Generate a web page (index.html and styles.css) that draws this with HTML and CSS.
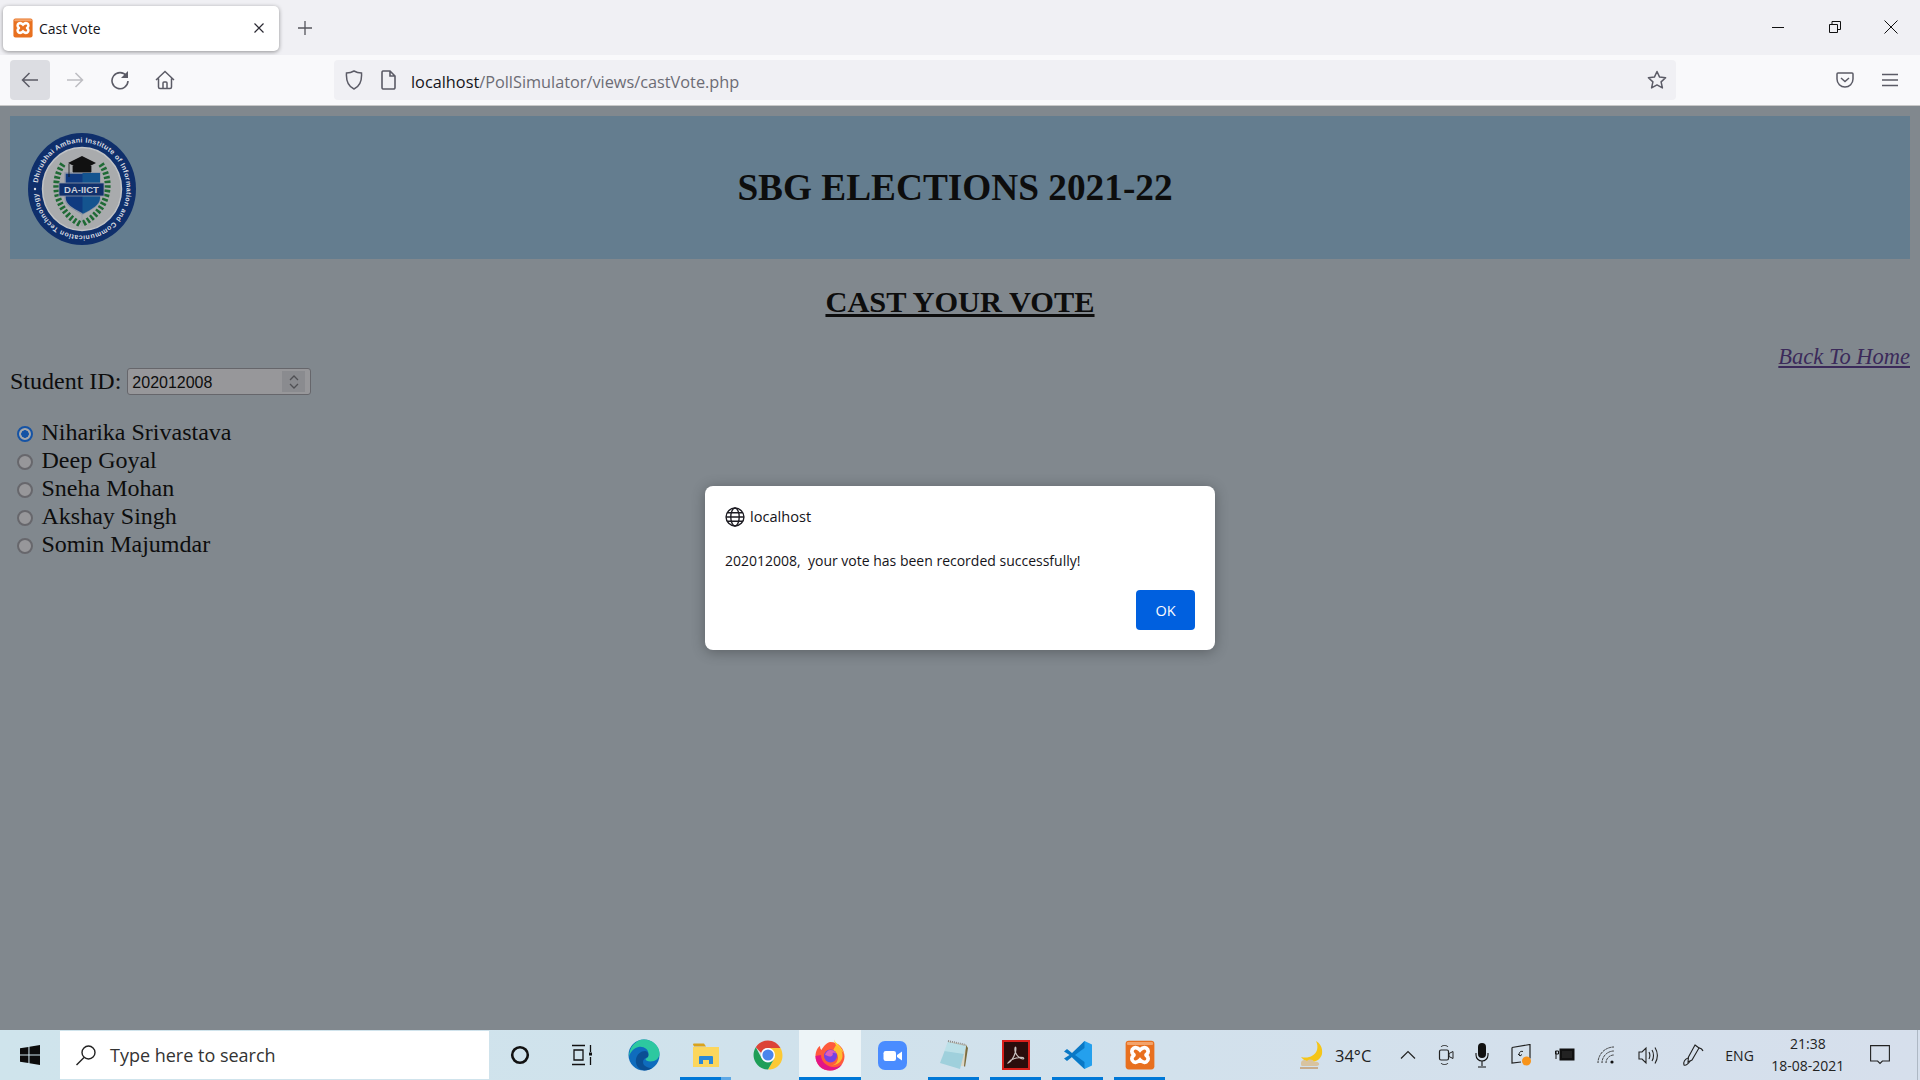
FILE: index.html
```html
<!DOCTYPE html>
<html lang="en">
<head>
    <meta charset="UTF-8">
    <title>Cast Vote</title>
    <link rel="stylesheet" href="styles.css">
</head>
<body>
    <svg class="defs" width="0" height="0">
        <symbol id="xampp" viewBox="0 0 24 24">
            <rect x="0.500" y="0.500" width="23" height="23" rx="2.500" fill="#e8701f"/>
            <rect x="1.500" y="1.500" width="21" height="2.500" rx="1" fill="#f3a36a"/>
            <path d="M7 6.500c2-1 3.500 0 5 1.500 1.500-1.500 3-2.500 5-1.500 2 1.200 2 3.800.2 5-.5.300-.5.700 0 1 1.800 1.200 1.800 3.800-.2 5-2 1-3.500 0-5-1.500-1.500 1.500-3 2.500-5 1.500-2-1.200-2-3.800-.2-5 .5-.3.500-.7 0-1C5 10.300 5 7.700 7 6.500z" fill="none" stroke="#fff" stroke-width="3"/>
        </symbol>
    </svg>

    <div class="tabbar">
        <div class="tab">
            <svg class="favicon" width="20" height="20"><use href="#xampp"/></svg>
            <span class="tab-title">Cast Vote</span>
            <svg class="tab-close" width="12" height="12" viewBox="0 0 12 12"><path d="M1.500 1.500l9 9M10.500 1.500l-9 9" stroke="#2b2a33" stroke-width="1.200"/></svg>
        </div>
        <svg class="new-tab" width="16" height="16" viewBox="0 0 16 16"><path d="M8 1v14M1 8h14" stroke="#55555c" stroke-width="1.300"/></svg>
        <div class="window-btns">
            <svg width="14" height="14" viewBox="0 0 14 14"><path d="M1 7.500h12" stroke="#111" stroke-width="1"/></svg>
            <svg width="14" height="14" viewBox="0 0 14 14"><path d="M1.500 4.500h8v8h-8zM4 4.500V1.500h8.500v8h-3" fill="none" stroke="#111" stroke-width="1"/></svg>
            <svg width="14" height="14" viewBox="0 0 14 14"><path d="M.5.500l13 13M13.500.500l-13 13" stroke="#111" stroke-width="1"/></svg>
        </div>
    </div>

    <div class="toolbar">
        <div class="nav-btn active">
            <svg width="18" height="18" viewBox="0 0 18 18"><path d="M17 9H1.500M8.500 2L1.500 9l7 7" fill="none" stroke="#5b5b66" stroke-width="1.500"/></svg>
        </div>
        <div class="nav-btn">
            <svg width="18" height="18" viewBox="0 0 18 18"><path d="M1 9h15.500M9.500 2l7 7-7 7" fill="none" stroke="#bdbdc2" stroke-width="1.500"/></svg>
        </div>
        <div class="nav-btn">
            <svg width="20" height="20" viewBox="0 0 20 20"><path d="M16.500 6A8 8 0 1 0 18 11" fill="none" stroke="#5b5b66" stroke-width="1.600"/><path d="M18 1v7h-7z" fill="#5b5b66"/></svg>
        </div>
        <div class="nav-btn">
            <svg width="20" height="20" viewBox="0 0 20 20"><path d="M1 10l9-8.500 9 8.500M3.500 8.500V17a1.500 1.500 0 0 0 1.500 1.500h10a1.500 1.500 0 0 0 1.500-1.500V8.500M8 18.500V13a1 1 0 0 1 1-1h2a1 1 0 0 1 1 1v5.500" fill="none" stroke="#5b5b66" stroke-width="1.500"/></svg>
        </div>
        <div class="urlbar">
            <svg class="shield" width="18" height="20" viewBox="0 0 18 20"><path d="M9 1c2.500 1.500 5 2 7.500 2 .5 7-1 13-7.500 16C2.500 16 1 10 1.500 3 4 3 6.500 2.500 9 1z" fill="none" stroke="#5b5b66" stroke-width="1.500"/></svg>
            <svg class="page-icon" width="16" height="20" viewBox="0 0 16 20"><path d="M2 1h7l5 5v11.500a1.500 1.500 0 0 1-1.500 1.500h-10.500a1.500 1.500 0 0 1-1-1.500V2.500A1.500 1.500 0 0 1 2 1zM9 1v5h5" fill="none" stroke="#5b5b66" stroke-width="1.600"/></svg>
            <span class="url"><span class="url-host">localhost</span>/PollSimulator/views/castVote.php</span>
            <svg class="star" width="20" height="20" viewBox="0 0 20 20"><path d="M10 1.500l2.600 5.600 6 .7-4.500 4.100 1.300 6L10 14.900l-5.400 3 1.300-6L1.400 7.800l6-.7z" fill="none" stroke="#5b5b66" stroke-width="1.500" stroke-linejoin="round"/></svg>
        </div>
        <svg class="pocket" width="18" height="16" viewBox="0 0 18 16"><path d="M2 1h14a1 1 0 0 1 1 1v5a8 8 0 0 1-16 0V2a1 1 0 0 1 1-1z" fill="none" stroke="#5b5b66" stroke-width="1.500"/><path d="M5 6l4 3.500L13 6" fill="none" stroke="#5b5b66" stroke-width="1.500"/></svg>
        <svg class="menu" width="16" height="14" viewBox="0 0 16 14"><path d="M0 1.500h16M0 7h16M0 12.500h16" stroke="#5b5b66" stroke-width="1.300"/></svg>
    </div>

    <div class="page">
        <div class="banner">
            <svg class="logo" width="108" height="112" viewBox="0 0 108 112">
                <defs>
                    <path id="ring" d="M9.500 56A44.500 46.500 0 1 1 98.500 56A44.500 46.500 0 1 1 9.500 56"/>
                </defs>
                <ellipse cx="54" cy="56" rx="54" ry="56" fill="#0f2f6b"/>
                <ellipse cx="54" cy="56" rx="39.500" ry="41.500" fill="#a9abad" stroke="#c2c4c6" stroke-width="1.500"/>
                <text class="logo-ring" textLength="275"><textPath href="#ring" startOffset="6">Dhirubhai Ambani Institute of Information and Communication Technology</textPath></text>
                <circle cx="7" cy="56" r="1.200" fill="#d9dce2"/>
                <path d="M35 31C22 50 28 78 52 91M73 31c13 19 7 47-19 60" fill="none" stroke="#1f6a35" stroke-width="6" stroke-dasharray="2.500 2"/>
                <path d="M37 40h35v25c0 7-8 11-17.500 16C45 76 37 72 37 65z" fill="#0f3a80" stroke="#8e97a6" stroke-width="1.500"/>
                <path d="M54.500 40H72v25c0 7-8 11-17.500 16z" fill="#14548f"/>
                <path d="M54 23l14 7-14 7-14-7z" fill="#111"/>
                <path d="M45 33h18v6H45zM41 31v13" fill="#111" stroke="#111" stroke-width=".8"/>
                <rect x="31" y="50" width="45" height="13" fill="#10306c" stroke="#8e97a6" stroke-width=".8"/>
                <text class="logo-name" x="53.500" y="60" text-anchor="middle">DA-IICT</text>
                <path d="M54 81v12" stroke="#8e97a6" stroke-width=".6"/>
            </svg>
            <h1 class="banner-title">SBG ELECTIONS 2021-22</h1>
        </div>

        <h2 class="vote-title">CAST YOUR VOTE</h2>

        <div class="home-link"><a href="#">Back To Home</a></div>

        <form class="vote-form">
            <div class="id-row">
                <label for="studentId">Student ID:</label>
                <div class="id-input">
                    <input id="studentId" type="text" value="202012008" readonly>
                    <div class="spinner">
                        <svg width="12" height="16" viewBox="0 0 12 16"><path d="M2 6l4-4 4 4M2 10l4 4 4-4" fill="none" stroke="#505054" stroke-width="1.300"/></svg>
                    </div>
                </div>
            </div>
            <div class="candidates">
                <label class="candidate"><input type="radio" name="vote" checked>Niharika Srivastava</label>
                <label class="candidate"><input type="radio" name="vote">Deep Goyal</label>
                <label class="candidate"><input type="radio" name="vote">Sneha Mohan</label>
                <label class="candidate"><input type="radio" name="vote">Akshay Singh</label>
                <label class="candidate"><input type="radio" name="vote">Somin Majumdar</label>
            </div>
        </form>

        <div class="dialog">
            <div class="dialog-origin">
                <svg width="20" height="20" viewBox="0 0 19 19"><g fill="none" stroke="#1c1b22" stroke-width="1.300"><circle cx="9.500" cy="9.500" r="8.500"/><ellipse cx="9.500" cy="9.500" rx="4" ry="8.500"/><path d="M1 9.500h17M2.200 5.500h14.600M2.200 13.500h14.600" /></g></svg>
                <span>localhost</span>
            </div>
            <p class="dialog-msg">202012008,&nbsp; your vote has been recorded successfully!</p>
            <div class="dialog-actions">
                <button class="dialog-ok" type="button">OK</button>
            </div>
        </div>
    </div>

    <div class="taskbar">
        <div class="start">
            <svg width="20" height="20" viewBox="0 0 19 19"><path d="M0 3l8-1.200V9H0zM9 1.600L19 0v9H9zM0 10h8v7.200L0 16zM9 10h10v9L9 17.400z" fill="#0c0c0c"/></svg>
        </div>
        <div class="search">
            <svg width="22" height="22" viewBox="0 0 22 22"><circle cx="13.500" cy="8.500" r="6.500" fill="none" stroke="#222" stroke-width="1.400"/><path d="M9 13.500L1.500 21" stroke="#222" stroke-width="1.500"/></svg>
            <span>Type here to search</span>
        </div>
        <div class="task-icons">
            <div class="task"><svg width="20" height="20" viewBox="0 0 20 20"><circle cx="10" cy="10" r="7.800" fill="none" stroke="#111" stroke-width="2.600"/></svg></div>
            <div class="task"><svg width="22" height="22" viewBox="0 0 22 22"><path d="M1 1.500h13M1 20.500h13M3 6h9v10H3zM19.500 1v7M19.500 13v8" fill="none" stroke="#111" stroke-width="1.300"/><rect x="18" y="8.500" width="3" height="3" fill="#111"/></svg></div>
            <div class="task"><svg width="32" height="32" viewBox="0 0 32 32">
                <circle cx="16" cy="16" r="15.500" fill="#0f6cbd"/>
                <path d="M1 18C1 8 8 .5 16 .5c9 0 15.500 7 15.500 14 0 5-4 8-9 8-3 0-5-1-5-2.500 2-1 3-3 3-5 0-5-5-8-10-7C6 9 2 13 1 18z" fill="#2dc8a0"/>
                <path d="M16.500 31.500C10 31 7 25 8 20c1-5 5-8 9-8 3 .5 4 3 3 6-3 .5-5 2.500-5 5 0 4 5 6 9 6-2 1.500-5 2.500-7.500 2.500z" fill="#0a4f94"/>
            </svg></div>
            <div class="task open split"><svg width="28" height="28" viewBox="0 0 28 28">
                <path d="M1 3.500a1 1 0 0 1 1-1h10l2 3H2z" fill="#d9a21b"/>
                <rect x="1" y="6" width="26" height="20" fill="#fcd65c"/>
                <path d="M7 23v-7a1 1 0 0 1 1-1h12a1 1 0 0 1 1 1v7h-4v-4h-6v4z" fill="#2a88d8"/>
            </svg></div>
            <div class="task"><svg width="30" height="30" viewBox="0 0 30 30">
                <path d="M15 .5c5.500 0 10 3 12.500 7.500H15c-3.500 0-6 2-6.800 5L2.800 7.200C5.500 3 10 .5 15 .5z" fill="#dc4437"/>
                <path d="M27.500 8c3 5.500 2.500 12-1 16.500S17 30 15 29.500L21 19c1-2.500.8-5-.8-7.200-.8-1.600-3-3.800-5.200-3.800z" fill="#fcc934"/>
                <path d="M2.800 7.200C0 11.500-.5 18 3 23c2.500 4 7 6.500 12 6.500L21 19c-1.300 2.200-3.500 3.500-6 3.500-3 0-5.500-2-6.500-4.500z" fill="#1e9e57"/>
                <circle cx="15" cy="15" r="7" fill="#fff"/>
                <circle cx="15" cy="15" r="5.600" fill="#4a85ec"/>
            </svg></div>
            <div class="task open current"><svg width="30" height="32" viewBox="0 0 30 32">
                <path d="M15 3c9 0 14.500 7 14.500 14.500S23 31.500 15 31.500.5 25.500.5 17C.5 12 3 8 5 7c0 2 .5 3 1.500 4C8 8 11 4 15 3z" fill="#ff5a3c"/>
                <path d="M.5 17c0 8.500 6.500 14.500 14.500 14.500 5 0 9-2 12-6-3 2-6 3-10 2.500-6-1-11-6-11-12z" fill="#e31587"/>
                <path d="M19 .5c1 3 5 5 8 10 1.500 2.500 2.500 5 2.500 7 0-3-2.500-6-5-7.500-2-1.500-4.500-4-5.500-9.500z" fill="#ffd535"/>
                <path d="M21 6c4 2 7 6 6.500 11.500C27 23 21 27 15 26.500c5 .5 8-4 8-8 0-3-2-6-5-7z" fill="#ffbd2e"/>
                <circle cx="15.500" cy="17" r="6.500" fill="#7542e5"/>
                <path d="M10 16c1-3 3-5 5.500-5 3 0 5.500 2 6 4-1-1-3-1.500-4-1 1 1 0 3-2 3.500-2 .5-4-1.500-5.500-1.500z" fill="#e05fb8"/>
            </svg></div>
            <div class="task"><svg width="29" height="29" viewBox="0 0 29 29">
                <rect width="29" height="29" rx="7" fill="#4a8cff"/>
                <rect x="5.500" y="10" width="12.500" height="10" rx="2.200" fill="#fff"/>
                <path d="M19 14l5-3.500v9L19 16z" fill="#fff"/>
            </svg></div>
            <div class="task open"><svg width="30" height="32" viewBox="0 0 30 32">
                <path d="M9 2l19 4-2 19-1 2H10z" fill="#dcd8c8"/>
                <path d="M27 6l2 3-3 19-1-1z" fill="#7b6c3e"/>
                <path d="M9 3l18 4-6 23-20-6z" fill="#9fd0dc"/>
                <path d="M9 3l18 4-2 8L5 12z" fill="#c8e7ec" opacity=".7"/>
                <path d="M9 2l18 4" stroke="#8b8b8b" stroke-width="2" stroke-dasharray="1 1"/>
            </svg></div>
            <div class="task open"><svg width="28" height="30" viewBox="0 0 28 30">
                <rect x="1" y="1" width="26" height="28" fill="#2b0d0c" stroke="#d8201c" stroke-width="2"/>
                <path d="M6 23c3-1.500 6-6 7.500-11 .5-2.500.5-5 0-5s-1 3 0 5.500c1.500 3.500 4 6 7.500 6.500 1 0 1-1 0-1.500-3-.5-8 .5-12 2.500C8 21 6 22.500 6 23z" fill="none" stroke="#c9c2c0" stroke-width="1.200"/>
            </svg></div>
            <div class="task open"><svg width="30" height="30" viewBox="0 0 30 30">
                <path d="M21.500 1L29 4.500v21L21.500 29 9 17.500z" fill="#24a0ed"/>
                <path d="M21.500 1L9 13l-5-4-3 2.500L6.500 15 1 18.500 4 21l5-4 12.500 12V22L12 15l9.500-7z" fill="#0a78c5"/>
            </svg></div>
            <div class="task open"><svg width="30" height="30"><use href="#xampp"/></svg></div>
        </div>
        <div class="tray">
            <div class="weather">
                <svg width="30" height="30" viewBox="0 0 30 30">
                    <path d="M18 1c4 2 7 7 6 13-1 5-6 8-11 8-4 0-8-2-10-5 7 2 14-1 16-7 .8-3 .5-6-1-9z" fill="#f5c518"/>
                    <path d="M3 23c0-3 4-4 6-2 2-2 6-2 7 1 3-1 6 1 5 3-1 1-3 1-5 1H4c-1 0-1-2-1-3z" fill="#d8c3a0"/>
                    <path d="M2 28h18" stroke="#c49a6c" stroke-width="1.500"/>
                </svg>
                <span>34°C</span>
            </div>
            <div class="tray-icons">
                <svg width="16" height="16" viewBox="0 0 16 16"><path d="M1 11.500L8 4.500l7 7" fill="none" stroke="#222" stroke-width="1.200"/></svg>
                <svg width="16" height="24" viewBox="0 0 16 24"><path d="M3 4c1-2 6-2 7 0M3 20c1 2 6 2 7 0" fill="none" stroke="#222" stroke-width="1"/><rect x="1.500" y="7" width="9" height="10" rx="1.500" fill="none" stroke="#222" stroke-width="1.200"/><path d="M11 10.500l4-2v7l-4-2z" fill="none" stroke="#222"/></svg>
                <svg width="14" height="25" viewBox="0 0 14 25"><rect x="3" y="0" width="8" height="15" rx="4" fill="#111"/><path d="M1 10v2a6 6 0 0 0 12 0v-2M7 18v5M3 24h8" fill="none" stroke="#111" stroke-width="1.100"/></svg>
                <svg width="22" height="22" viewBox="0 0 22 22"><path d="M1 3.500L19 .5v14M1 3.500V19l9-1" fill="none" stroke="#222" stroke-width="1.200"/><path d="M12 7.500c-3-1-5 2-3 4.500M7 10l2 2 2-1.500" fill="none" stroke="#222"/><circle cx="15.500" cy="17" r="4.500" fill="#f7931a"/></svg>
                <svg width="20" height="14" viewBox="0 0 20 14"><rect x="5" y="1" width="14" height="11" fill="#111" stroke="#111"/><rect x="7" y="3" width="10" height="7" fill="#222"/><path d="M1 3v8M.5 3h3v3h-3z" stroke="#111" fill="none"/></svg>
                <svg width="20" height="20" viewBox="0 0 20 20"><path d="M1 18A16 16 0 0 1 17 2M5 18A12 12 0 0 1 17 6M9 18a8 8 0 0 1 8-8" fill="none" stroke="#333" stroke-width="1" stroke-dasharray="2.500 .7"/><circle cx="15" cy="17" r="1.600" fill="#111"/></svg>
                <svg width="20" height="20" viewBox="0 0 20 20"><path d="M1 7h3l4-4v15l-4-4H1zM11 7c1 2 1 5 0 7M14 5c2 3 2 8 0 11M17 2.500c3 5 3 11 0 16" fill="none" stroke="#222" stroke-width="1.100"/></svg>
            </div>
            <svg class="pen" width="22" height="24" viewBox="0 0 22 24"><path d="M13 2l4 3-7 12-4 2 .5-5z" fill="none" stroke="#222" stroke-width="1.100"/><path d="M17 5c2 0 3 1 4 3M6 15c-3 1-5 4-4 7 2 1 5-2 6-4" fill="none" stroke="#222" stroke-width="1.100"/></svg>
            <span class="lang">ENG</span>
            <div class="clock">
                <span>21:38</span>
                <span>18-08-2021</span>
            </div>
            <svg class="notify" width="20" height="20" viewBox="0 0 20 20"><path d="M.6.600h18.800v15.400h-7l-2.400 2.500L7.600 16h-7z" fill="none" stroke="#222" stroke-width="1.100"/></svg>
        </div>
    </div>
</body>
</html>
```

FILE: styles.css
```css
* {
    box-sizing: border-box;
}

html, body {
    height: 100%;
}

body {
    margin: 0;
    display: flex;
    flex-direction: column;
    overflow: hidden;
    font-family: "Open Sans", "Noto Sans", sans-serif;
    background-color: #81888e;
}

.defs {
    position: absolute;
}

svg {
    display: block;
    flex-shrink: 0;
}

/* browser chrome */
.tabbar {
    height: 55px;
    background-color: #f0f0f4;
    display: flex;
    align-items: center;
    padding-left: 3px;
    padding-top: 1px;
}

.tab {
    width: 276px;
    height: 45px;
    background-color: #fff;
    border-radius: 5px;
    box-shadow: 0 1px 4px rgba(0,0,0,0.4);
    display: flex;
    align-items: center;
    padding: 0 14px 0 10px;
}

.tab-title {
    margin-left: 6px;
    flex: 1;
    font-size: 14px;
    color: #15141a;
}

.new-tab {
    margin-left: 18px;
}

.window-btns {
    margin-left: auto;
    display: flex;
    align-items: center;
    gap: 42.500px;
    padding-right: 22px;
    margin-top: -3px;
}

.toolbar {
    height: 51px;
    background-color: #f9f9fb;
    border-bottom: 1px solid #c8c8c8;
    display: flex;
    align-items: center;
    padding: 0 20px 1px 10px;
}

.nav-btn {
    width: 40px;
    height: 40px;
    margin-right: 5px;
    border-radius: 4px;
    display: flex;
    align-items: center;
    justify-content: center;
}

.nav-btn.active {
    background-color: #dcdde2;
}

.urlbar {
    width: 1342px;
    height: 40px;
    margin-left: 144px;
    background-color: #f0f0f4;
    border-radius: 4px;
    display: flex;
    align-items: center;
    padding-left: 11px;
    padding-right: 9px;
}

.page-icon {
    margin-left: 18px;
}

.url {
    margin-left: 14px;
    padding-top: 5px;
    font-size: 16.300px;
    color: #6c6c75;
    flex: 1;
}

.url-host {
    color: #15141a;
}

.pocket {
    margin-left: 160px;
}

.menu {
    margin-left: 28px;
}

/* page content */
.page {
    flex: 1;
    position: relative;
    padding: 10px 10px 0;
    font-family: "Liberation Serif", serif;
    color: #0d0d0d;
}

.banner {
    height: 143px;
    background-color: #647d8f;
    display: flex;
    align-items: center;
    padding-left: 18px;
}

.logo {
    margin-top: 2px;
}

.logo-ring {
    font-family: "Liberation Sans", sans-serif;
    font-size: 7px;
    font-weight: bold;
    fill: #d9dce2;
}

.logo-name {
    font-family: "Liberation Sans", sans-serif;
    font-size: 9.500px;
    font-weight: bold;
    fill: #c9ced8;
}

.banner-title {
    flex: 1;
    margin: 0;
    padding: 0 136px 1px 0;
    text-align: center;
    font-size: 37.300px;
}

.vote-title {
    margin: 25px 0 0;
    text-align: center;
    font-size: 30.400px;
    line-height: 36px;
    text-decoration: underline;
}

.home-link {
    margin-top: 25px;
    height: 23px;
    line-height: 24px;
    text-align: right;
    font-size: 22.500px;
    font-style: italic;
}

.home-link a {
    color: #3b2a5a;
}

.vote-form {
    font-size: 24px;
}

.id-row {
    display: flex;
    align-items: center;
    gap: 6px;
}

.id-input {
    width: 184px;
    height: 27px;
    background-color: #97979a;
    border: 1px solid #66666b;
    border-radius: 3px;
    display: flex;
    align-items: center;
    padding: 0 5px 0 4px;
}

.id-input input {
    flex: 1;
    min-width: 0;
    border: none;
    padding: 2px 0 0;
    background: none;
    font-family: "Liberation Sans", sans-serif;
    font-size: 16px;
    color: #0d0d0d;
    outline: none;
}

.spinner {
    width: 23px;
    height: 21px;
    background-color: #8a8b8f;
    display: flex;
    align-items: center;
    justify-content: center;
}

.candidates {
    margin-top: 23px;
    display: flex;
    flex-direction: column;
}

.candidate {
    height: 28px;
    display: flex;
    align-items: center;
    line-height: 28px;
}

.candidate input {
    appearance: none;
    width: 16px;
    height: 16px;
    margin: 3px 8.500px 0 7px;
    border: 2px solid #67676c;
    border-radius: 50%;
    background-color: #97979a;
}

.candidate input:checked {
    border-color: #1553a5;
    background: radial-gradient(circle, #1553a5 3.500px, #a5a7ab 4px);
}

/* alert box */
.dialog {
    position: absolute;
    left: 705px;
    top: 380px;
    width: 510px;
    height: 164px;
    background-color: #fff;
    border-radius: 8px;
    box-shadow: 0 2px 14px rgba(0,0,0,0.3);
    padding: 21px 20px 0;
    font-family: "Open Sans", "Noto Sans", sans-serif;
    color: #15141a;
}

.dialog-origin {
    display: flex;
    align-items: center;
    gap: 5px;
    font-size: 14.600px;
    height: 19px;
}

.dialog-origin span {
    margin-bottom: 2px;
}

.dialog-msg {
    margin: 25px 0 0;
    font-size: 14px;
    line-height: 20px;
}

.dialog-actions {
    display: flex;
    justify-content: flex-end;
    margin-top: 19px;
}

.dialog-ok {
    width: 59px;
    height: 40px;
    border: none;
    border-radius: 4px;
    background-color: #0060df;
    color: #fbfbfe;
    font-family: inherit;
    font-size: 14.500px;
}

/* windows taskbar */
.taskbar {
    height: 50px;
    background: linear-gradient(90deg, #cfe4ec 0%, #d0e2ec 40%, #d6dfec 100%);
    display: flex;
    align-items: stretch;
}

.start {
    width: 60px;
    flex-shrink: 0;
    display: flex;
    align-items: center;
    justify-content: center;
}

.search {
    width: 429px;
    flex-shrink: 0;
    margin: 1px 0;
    background-color: #fff;
    display: flex;
    align-items: center;
    padding-left: 15px;
    gap: 13px;
    font-size: 18px;
    color: #333;
}

.task-icons {
    display: flex;
    flex-shrink: 0;
}

.task {
    width: 62px;
    display: flex;
    align-items: center;
    justify-content: center;
    position: relative;
}

.task.open::after {
    content: "";
    position: absolute;
    left: 5px;
    right: 6px;
    bottom: 0;
    height: 3px;
    background-color: #0078d7;
}

.task.split::after {
    background: linear-gradient(90deg, #0078d7 0 80%, #5ea9e6 80%);
}

.task.current {
    background-color: #edf4f7;
}

.task.current::after {
    left: 0;
    right: 0;
}

.tray {
    flex: 1;
    display: flex;
    align-items: center;
    font-size: 16px;
    color: #222;
    padding-left: 127px;
    margin-right: 2px;
    border-right: 1px solid #aeb8c4;
}

.weather {
    display: flex;
    align-items: center;
    gap: 7px;
    font-size: 16.500px;
}

.tray-icons {
    display: flex;
    align-items: center;
    justify-content: space-between;
    width: 258.500px;
    margin-left: 28.500px;
}

.pen {
    margin-left: 24px;
}

.lang {
    margin-left: 21px;
    font-size: 14px;
}

.clock {
    margin-left: 14px;
    width: 80px;
    display: flex;
    flex-direction: column;
    align-items: center;
    gap: 6px;
    font-size: 14px;
    line-height: 16px;
}

.notify {
    margin-left: 22px;
}
```
